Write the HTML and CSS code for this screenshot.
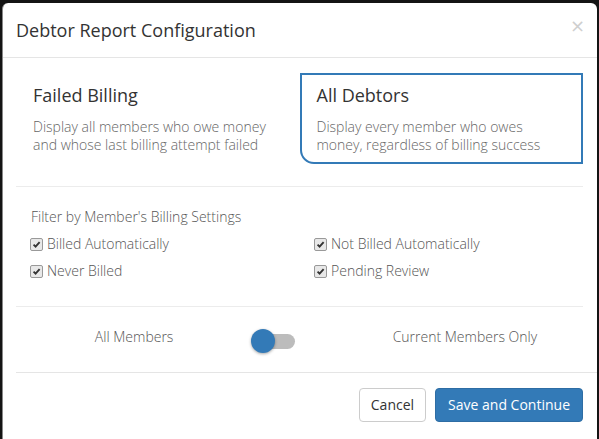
FILE: index.html
```html
<!DOCTYPE html>
<html>
<head>
<meta charset="utf-8">
<link rel="stylesheet" href="styles.css">
</head>
<body>
<div class="modal">
  <div class="modal-header">
    <h4 class="modal-title">Debtor Report Configuration</h4>
    <span class="close">&times;</span>
  </div>
  <div class="modal-body">
    <div class="options">
      <div class="option">
        <div class="option-title">Failed Billing</div>
        <div class="option-desc">Display all members who owe money and whose last billing attempt failed</div>
      </div>
      <div class="option selected">
        <div class="option-title">All Debtors</div>
        <div class="option-desc">Display every member who owes money, regardless of billing success</div>
      </div>
    </div>
    <div class="filters">
      <div class="filter-label">Filter by Member's Billing Settings</div>
      <div class="checks">
        <label class="check"><span class="box"><svg viewBox="0 0 12 12" width="12" height="12"><path d="M2.8 6.2 L5 8.4 L9.4 3.4" fill="none" stroke="#333" stroke-width="2"/></svg></span>Billed Automatically</label>
        <label class="check"><span class="box"><svg viewBox="0 0 12 12" width="12" height="12"><path d="M2.8 6.2 L5 8.4 L9.4 3.4" fill="none" stroke="#333" stroke-width="2"/></svg></span>Not Billed Automatically</label>
        <label class="check"><span class="box"><svg viewBox="0 0 12 12" width="12" height="12"><path d="M2.8 6.2 L5 8.4 L9.4 3.4" fill="none" stroke="#333" stroke-width="2"/></svg></span>Never Billed</label>
        <label class="check"><span class="box"><svg viewBox="0 0 12 12" width="12" height="12"><path d="M2.8 6.2 L5 8.4 L9.4 3.4" fill="none" stroke="#333" stroke-width="2"/></svg></span>Pending Review</label>
      </div>
    </div>
    <div class="toggle-row">
      <div class="toggle-label">All Members</div>
      <div class="toggle-cell"><span class="switch"><span class="track"></span><span class="knob"></span></span></div>
      <div class="toggle-label">Current Members Only</div>
    </div>
  </div>
  <div class="modal-footer">
    <button class="btn btn-default">Cancel</button>
    <button class="btn btn-primary">Save and Continue</button>
  </div>
</div>
</body>
</html>
```

FILE: styles.css
```css
html, body {
  margin: 0;
  height: 100%;
}
body {
  background: #141414;
  font-family: "Open Sans", "DejaVu Sans", sans-serif;
  color: #333;
  overflow: hidden;
}
.modal {
  margin: 3px 2px 0 2px;
  background: #fff;
  border-radius: 6px 6px 0 0;
  height: 100%;
  border-left: 1px solid #888;
}
.modal-header {
  position: relative;
  padding: 15px 14px 14px 13px;
  border-bottom: 1px solid #e5e5e5;
}
.modal-title {
  margin: 0;
  font-size: 18px;
  font-weight: 400;
  line-height: 25px;
  color: #333;
}
.close {
  position: absolute;
  right: 12px;
  top: 11px;
  font-size: 18px;
  line-height: 24px;
  color: #cfcfcf;
  font-family: "DejaVu Sans", sans-serif;
}
.modal-body {
  padding: 0 14px 0 13px;
}
.options {
  display: grid;
  grid-template-columns: 1fr 1fr;
  padding: 15px 0 22px;
  border-bottom: 1px solid #ececec;
}
.option {
  border: 2px solid transparent;
  border-bottom-left-radius: 14px;
  padding: 7px 15px 8px;
}
.option.selected {
  border-color: #337ab7;
}
.option-title {
  font-size: 18px;
  line-height: 26px;
  color: #333;
}
.option-desc {
  margin-top: 10px;
  font-size: 14px;
  line-height: 18px;
  font-weight: 300;
  color: #666;
}
.filters {
  padding: 21px 15px 26px;
  border-bottom: 1px solid #ececec;
}
.filter-label {
  font-size: 14px;
  line-height: 18px;
  font-weight: 300;
  color: #555;
  margin-bottom: 9px;
}
.checks {
  display: grid;
  grid-template-columns: 284px 1fr;
  row-gap: 9px;
}
.check {
  display: flex;
  align-items: center;
  font-size: 14px;
  line-height: 18px;
  font-weight: 300;
  color: #555;
}
.box {
  width: 11px;
  height: 11px;
  border: 1px solid #999;
  border-radius: 2px;
  background: #e8e8e8;
  margin-right: 4px;
  margin-left: -1px;
  display: flex;
  align-items: center;
  justify-content: center;
  overflow: hidden;
}
.box svg {
  width: 11px;
  height: 11px;
}
.toggle-row {
  display: grid;
  grid-template-columns: 5fr 2fr 5fr;
  align-items: center;
  height: 65px;
  border-bottom: 1px solid #e5e5e5;
  margin: 0 -14px 0 0;
  padding-right: 14px;
}
.toggle-label {
  text-align: center;
  font-size: 14px;
  font-weight: 300;
  color: #555;
  margin-top: -6px;
}
.toggle-cell {
  display: flex;
}
.switch {
  position: relative;
  width: 46px;
  height: 26px;
  margin-left: -1px;
  margin-top: 4px;
}
.track {
  position: absolute;
  left: 10px;
  top: 5px;
  width: 34px;
  height: 15px;
  border-radius: 8px;
  background: #bcbcbc;
}
.knob {
  position: absolute;
  left: 0;
  top: 0;
  width: 24px;
  height: 24px;
  border-radius: 50%;
  background: #337ab7;
  box-shadow: 0 1px 3px rgba(0,0,0,0.35);
}
.modal-footer {
  display: flex;
  justify-content: flex-end;
  gap: 9px;
  padding: 15px 14px;
}
.btn {
  font-family: "Open Sans", "DejaVu Sans", sans-serif;
  font-size: 14px;
  line-height: 20px;
  padding: 6px 11px;
  height: 34px;
  border-radius: 4px;
  border: 1px solid #ccc;
  background: #fff;
  color: #333;
}
.btn-primary {
  background: #337ab7;
  border-color: #2e6da4;
  color: #fff;
  padding: 6px 12px;
}
```
